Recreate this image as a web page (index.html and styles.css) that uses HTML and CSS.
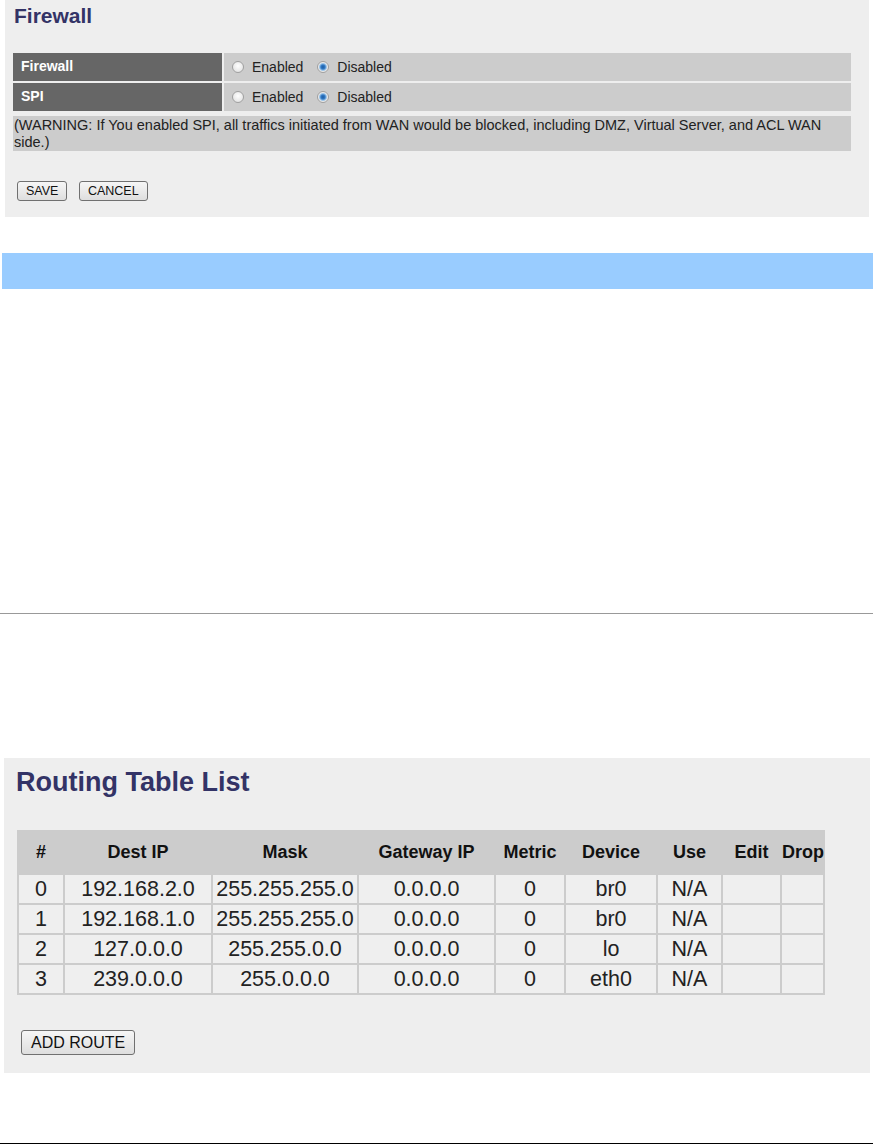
FILE: index.html
```html
<!DOCTYPE html>
<html>
	<head>
		<meta charset="utf-8">
		<title>Firewall</title>
		<link rel="stylesheet" href="styles.css">
	</head>
	<body>
		<div class="panel firewall">
			<h2 class="title">Firewall</h2>
			<table class="setTable">
				<tr>
					<td class="label">Firewall</td>
					<td class="value">
						<span class="radio"></span><span class="opt">Enabled</span>
						<span class="radio checked"></span><span class="opt">Disabled</span>
					</td>
				</tr>
				<tr>
					<td class="label">SPI</td>
					<td class="value">
						<span class="radio"></span><span class="opt">Enabled</span>
						<span class="radio checked"></span><span class="opt">Disabled</span>
					</td>
				</tr>
			</table>
			<div class="warning">(WARNING: If You enabled SPI, all traffics initiated from WAN would be blocked, including DMZ, Virtual Server, and ACL WAN side.)</div>
			<div class="btns">
				<button class="btn">SAVE</button>
				<button class="btn">CANCEL</button>
			</div>
		</div>

		<div class="blueBar"></div>

		<div class="rule"></div>

		<div class="panel routing">
			<h2 class="title big">Routing Table List</h2>
			<table class="routeTable">
				<colgroup>
					<col style="width:44px">
					<col style="width:146px">
					<col style="width:144px">
					<col style="width:135px">
					<col style="width:68px">
					<col style="width:90px">
					<col style="width:63px">
					<col style="width:57px">
					<col style="width:41px">
				</colgroup>
				<tr class="head">
					<th>#</th>
					<th>Dest IP</th>
					<th>Mask</th>
					<th>Gateway IP</th>
					<th>Metric</th>
					<th>Device</th>
					<th>Use</th>
					<th>Edit</th>
					<th>Drop</th>
				</tr>
				<tr>
					<td>0</td><td>192.168.2.0</td><td>255.255.255.0</td><td>0.0.0.0</td><td>0</td><td>br0</td><td>N/A</td><td></td><td></td>
				</tr>
				<tr>
					<td>1</td><td>192.168.1.0</td><td>255.255.255.0</td><td>0.0.0.0</td><td>0</td><td>br0</td><td>N/A</td><td></td><td></td>
				</tr>
				<tr>
					<td>2</td><td>127.0.0.0</td><td>255.255.0.0</td><td>0.0.0.0</td><td>0</td><td>lo</td><td>N/A</td><td></td><td></td>
				</tr>
				<tr>
					<td>3</td><td>239.0.0.0</td><td>255.0.0.0</td><td>0.0.0.0</td><td>0</td><td>eth0</td><td>N/A</td><td></td><td></td>
				</tr>
			</table>
			<div class="btns">
				<button class="btn large">ADD ROUTE</button>
			</div>
		</div>

		<div class="rule dark"></div>
	</body>
</html>
```

FILE: styles.css
```css
* {
	margin: 0;
	padding: 0;
	box-sizing: border-box;
}

html,
body {
	height: 100%;
	overflow: hidden;
}

body {
	background-color: #fff;
	font-family: "Liberation Sans", Arial, sans-serif;
	color: #222;
}

.panel {
	background-color: #eee;
}

.title {
	font-size: 21px;
	line-height: 24px;
	font-weight: bold;
	color: #333366;
}

/* firewall */
.firewall {
	width: 864px;
	margin-left: 5px;
	padding: 4px 18px 16px 8px;
}

.firewall .title {
	margin-left: 1px;
}

.setTable {
	width: 842px;
	margin: 23px 0 0 -2px;
	border-spacing: 2px;
	font-size: 14px;
}

.setTable td {
	height: 28px;
	vertical-align: middle;
}

.setTable .label {
	width: 209px;
	padding: 0 0 3px 8px;
	font-weight: bold;
	color: #fff;
	background-color: #666;
}

.setTable .value {
	padding-left: 8px;
	background-color: #ccc;
}

.radio {
	display: inline-block;
	width: 12px;
	height: 12px;
	margin-right: 8px;
	vertical-align: -1px;
	border: 1px solid #a0a0a0;
	border-radius: 50%;
	background: radial-gradient(circle at 50% 40%, #fff 0, #e6e6e6 70%);
}

.radio.checked {
	background: radial-gradient(circle, #1e5aa0 0, #2f78c4 2px, #9cc4e8 3.5px, #eaeaea 4.5px);
}

.opt {
	margin-right: 10px;
}

.warning {
	margin-top: 3px;
	padding: 1px 0 0 1px;
	font-size: 14.5px;
	line-height: 17px;
	height: 35px;
	background-color: #ccc;
}

.btns {
	margin: 30px 0 0 4px;
}

.btn {
	height: 20px;
	padding: 0 8px;
	margin-right: 7px;
	font-family: "Liberation Sans", Arial, sans-serif;
	font-size: 12.5px;
	color: #111;
	border: 1px solid #707070;
	border-radius: 3px;
	background: linear-gradient(#f6f6f6, #dedede);
}

.btn.large {
	height: 25px;
	padding: 0 9px;
	font-size: 16px;
}

.blueBar {
	height: 36px;
	margin: 36px 0 0 2px;
	background-color: #99ccff;
}

.rule {
	height: 1px;
	margin-top: 324px;
	background-color: #999;
}

/* routing */
.routing {
	width: 866px;
	margin: 144px 0 0 4px;
	padding: 8px 0 18px 13px;
}

.title.big {
	font-size: 27px;
	line-height: 32px;
	margin-left: -1px;
}

.routeTable {
	width: 808px;
	margin-top: 32px;
	table-layout: fixed;
	border-spacing: 2px;
	background-color: #ccc;
}

.routeTable th {
	height: 41px;
	font-size: 18px;
	color: #111;
	text-align: center;
	white-space: nowrap;
	background-color: #ccc;
}

.routeTable td {
	height: 28px;
	font-size: 21.5px;
	text-align: center;
	white-space: nowrap;
	background-color: #efefef;
}

.routing .btns {
	margin: 35px 0 0 4px;
}

.rule.dark {
	margin-top: 70px;
	background-color: #000;
}
```
